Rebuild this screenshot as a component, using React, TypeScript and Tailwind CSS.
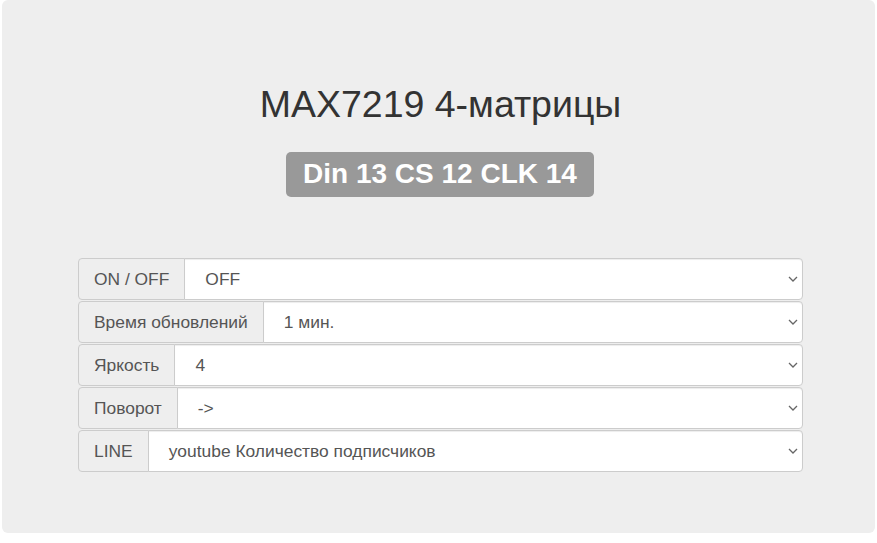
import React from "react";

const rows: { label: string; value: string }[] = [
  { label: "ON / OFF", value: "OFF" },
  { label: "Время обновлений", value: "1 мин." },
  { label: "Яркость", value: "4" },
  { label: "Поворот", value: "->" },
  { label: "LINE", value: "youtube Количество подписчиков" },
];

function Chevron() {
  return (
    <svg
      className="pointer-events-none absolute right-[4px] top-1/2 -translate-y-1/2"
      width="10"
      height="6"
      viewBox="0 0 10 6"
      fill="none"
    >
      <path d="M1 1l4 4 4-4" stroke="#666" strokeWidth="1.3" />
    </svg>
  );
}

export default function App() {
  return (
    <div
      className="w-[877px] h-[543px] bg-white"
      style={{ fontFamily: '"Liberation Sans", Arial, sans-serif' }}
    >
      <div className="ml-[2px] w-[873px] h-[533px] bg-[#eeeeee] rounded-[6px] flex flex-col">
        <h1 className="mt-[83px] ml-[4px] text-center text-[37.5px] leading-[42px] text-[#333333]">
          MAX7219 4-матрицы
        </h1>
        <div className="mt-[27px] ml-[3px] flex justify-center">
          <span className="h-[45px] px-[17px] flex items-center rounded-[5px] bg-[#999999] text-white font-bold text-[28px] leading-none pb-[2px]">
            Din 13 CS 12 CLK 14
          </span>
        </div>
        <div className="mt-[61px] ml-[76px] w-[725px] flex flex-col gap-[1px]">
          {rows.map((r) => (
            <div key={r.label} className="flex h-[42px]">
              <div className="flex items-center px-[15px] border border-[#cccccc] rounded-l-[4px] bg-[#eeeeee] text-[17.4px] text-[#555555] whitespace-nowrap">
                {r.label}
              </div>
              <div className="relative flex-1 flex items-center -ml-px border border-[#cccccc] rounded-r-[4px] bg-white shadow-[inset_0_1px_1px_rgba(0,0,0,0.075)] pl-[20px] text-[17.4px] text-[#555555]">
                {r.value}
                <Chevron />
              </div>
            </div>
          ))}
        </div>
      </div>
    </div>
  );
}
